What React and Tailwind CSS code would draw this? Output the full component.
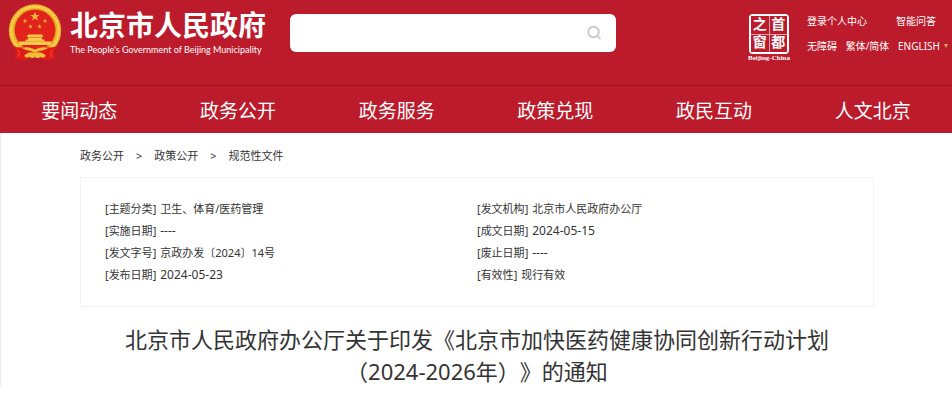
const navItems = ['要闻动态', '政务公开', '政务服务', '政策兑现', '政民互动', '人文北京']

const crumbs = ['政务公开', '政策公开', '规范性文件']

const leftMeta = [
  { label: '主题分类', value: '卫生、体育/医药管理' },
  { label: '实施日期', value: '----' },
  { label: '发文字号', value: '京政办发〔2024〕14号' },
  { label: '发布日期', value: '2024-05-23' },
]

const rightMeta = [
  { label: '发文机构', value: '北京市人民政府办公厅' },
  { label: '成文日期', value: '2024-05-15' },
  { label: '废止日期', value: '----' },
  { label: '有效性', value: '现行有效' },
]

function Star({ x, y, r }) {
  const points = Array.from({ length: 10 }, (_, i) => {
    const radius = i % 2 === 0 ? r : r * 0.4
    const a = -Math.PI / 2 + (i * Math.PI) / 5
    return `${(x + radius * Math.cos(a)).toFixed(2)},${(y + radius * Math.sin(a)).toFixed(2)}`
  })
  return <polygon points={points.join(' ')} fill="#f3b63c" />
}

function Emblem() {
  return (
    <svg viewBox="0 0 54 57" className="h-[57px] w-[54px] shrink-0" aria-hidden="true">
      {/* Wheat ring */}
      <circle cx="27" cy="26.5" r="26.2" fill="#eeb52c" />
      <circle cx="27" cy="26.5" r="24" fill="none" stroke="#f8cf4c" strokeWidth="2.4" />
      <circle cx="27" cy="26.5" r="24.8" fill="none" stroke="#e3a526" strokeWidth="1.2" strokeDasharray="1 2.4" />
      <circle cx="27" cy="26" r="21" fill="#d98c1e" />
      <circle cx="27" cy="26" r="20.2" fill="#e2231c" />
      <Star x={27} y={12.5} r={5} />
      <Star x={17} y={17} r={2.4} />
      <Star x={22.5} y={22.5} r={2.4} />
      <Star x={31.5} y={22.5} r={2.4} />
      <Star x={37} y={17} r={2.4} />
      {/* Gate */}
      <path d="M20 30.5 H34 L35.5 33 H18.5 Z M20 33.5 H34 V35.5 H20 Z M18 35.5 H36 L37 37.5 H43 V41 H11 V37.5 H17 Z" fill="#fbc94b" />
      <path d="M20 33.4 H34 M17 37.4 H37" fill="none" stroke="#e59c24" strokeWidth="0.7" />
      {/* Drapery */}
      <path d="M6 42 C11 45 17 42 22 44 L27 46 L32 44 C37 42 43 45 48 42 L46 48 L47 55 L36 56 L33 53 L27 51 L21 53 L18 56 L7 55 L8 48 Z" fill="#e21a1a" />
      <path d="M14 44 Q20 42 27 45.5 Q34 42 40 44 Q36 47 31 47 L27 49 L23 47 Q18 47 14 44 Z" fill="#f4bd38" />
      <path d="M18 50 Q22 47 27 49 Q32 47 36 50 L38 52 L35 54 L33 53 Q29 55 27 53 Q25 55 21 53 L19 54 L16 52 Z" fill="#f4bd38" />
      <path d="M10 46 Q13 49 10 53 M44 46 Q41 49 44 53" fill="none" stroke="#f0522a" strokeWidth="1" />
    </svg>
  )
}

function CapitalWindow() {
  return (
    <a href="#" className="flex w-11 shrink-0 flex-col items-center font-['Liberation_Serif','Noto_Sans_CJK_SC',serif] text-white">
      <span className="grid size-10 grid-cols-2 grid-rows-2 gap-px rounded-sm border-2 border-white bg-white/60 text-[14px] leading-none font-bold">
        {['之', '首', '窗', '都'].map(c => (
          <span key={c} className="flex items-center justify-center bg-[#bc1b2c]">{c}</span>
        ))}
      </span>
      <span className="text-[7px] leading-[8px] font-bold whitespace-nowrap">Beijing-China</span>
    </a>
  )
}

function MetaList({ items }) {
  return (
    <dl className="flex-1">
      {items.map(({ label, value }) => (
        <div key={label} className="flex gap-1 leading-[22px]">
          <dt>[{label}]</dt>
          <dd className={/^[\d-]+$/.test(value) ? 'text-[12px]' : ''}>{value}</dd>
        </div>
      ))}
    </dl>
  )
}

export default function App() {
  return (
    <div className="bg-white font-['Noto_Sans','Noto_Sans_CJK_SC',sans-serif] text-[#333] [text-spacing-trim:space-all]">
      <header className="bg-[#bc1b2c] text-white">
        <div className="flex h-[86px] items-start border-b border-[#a01222] pl-2">
          <a href="#" className="flex w-[282px] shrink-0 items-start gap-2 pt-1">
            <Emblem />
            <span className="flex flex-col pt-1 whitespace-nowrap">
              <span className="text-[28px] leading-[34px] font-bold">北京市人民政府</span>
              <span className="font-['Lato',sans-serif] text-[9px] leading-4">The People's Government of Beijing Municipality</span>
            </span>
          </a>

          <form className="mt-3.5 flex h-[38px] flex-1 items-center rounded-md bg-white pr-3.5">
            <input type="text" aria-label="搜索" className="h-full min-w-0 flex-1 rounded-md px-3 text-sm text-[#333] outline-none" />
            <button type="submit" aria-label="搜索">
              <svg viewBox="0 0 16 16" className="size-4" fill="none" stroke="#cdcdcd" strokeWidth="2">
                <circle cx="7.5" cy="7" r="5.3" />
                <path d="M11.2 10.8 L14.5 14" />
              </svg>
            </button>
          </form>

          <div className="flex w-[336px] shrink-0 items-start justify-end gap-4 pt-3.5 pr-1">
            <CapitalWindow />
            <div className="w-[141px] text-[10px] whitespace-nowrap">
              <div className="flex justify-between pr-3 leading-[14px]">
                <a href="#">登录个人中心</a>
                <a href="#">智能问答</a>
              </div>
              <div className="mt-[11px] flex items-center justify-between leading-[14px]">
                <a href="#">无障碍</a>
                <a href="#">繁体/简体</a>
                <a href="#" className="flex items-center gap-1">
                  ENGLISH
                  <svg viewBox="0 0 4 4" className="size-1" fill="#d8a66a">
                    <path d="M0 0 H4 L2 4 Z" />
                  </svg>
                </a>
              </div>
            </div>
          </div>
        </div>

        <nav className="grid h-[47px] grid-cols-6 items-center pt-1 text-center text-[19px]">
          {navItems.map(item => (
            <a key={item} href="#">{item}</a>
          ))}
        </nav>
      </header>

      <main className="border-l border-[#ececec] pt-3 pr-[78px] pl-[79px]">
        <nav className="flex gap-3 text-[11px] leading-[22px]">
          {crumbs.map((c, i) => (
            <span key={c} className="flex gap-3">
              {i > 0 && <span>&gt;</span>}
              <a href="#">{c}</a>
            </span>
          ))}
        </nav>

        <section className="mt-2.5 flex border border-[#f3f3f0] px-6 py-5 text-[11px]">
          <MetaList items={leftMeta} />
          <MetaList items={rightMeta} />
        </section>

        <h1 className="mt-4 px-8 text-center text-[22px] leading-8">
          北京市人民政府办公厅关于印发《北京市加快医药健康协同创新行动计划
          <br />
          （2024-2026年）》的通知
        </h1>
      </main>
    </div>
  )
}
